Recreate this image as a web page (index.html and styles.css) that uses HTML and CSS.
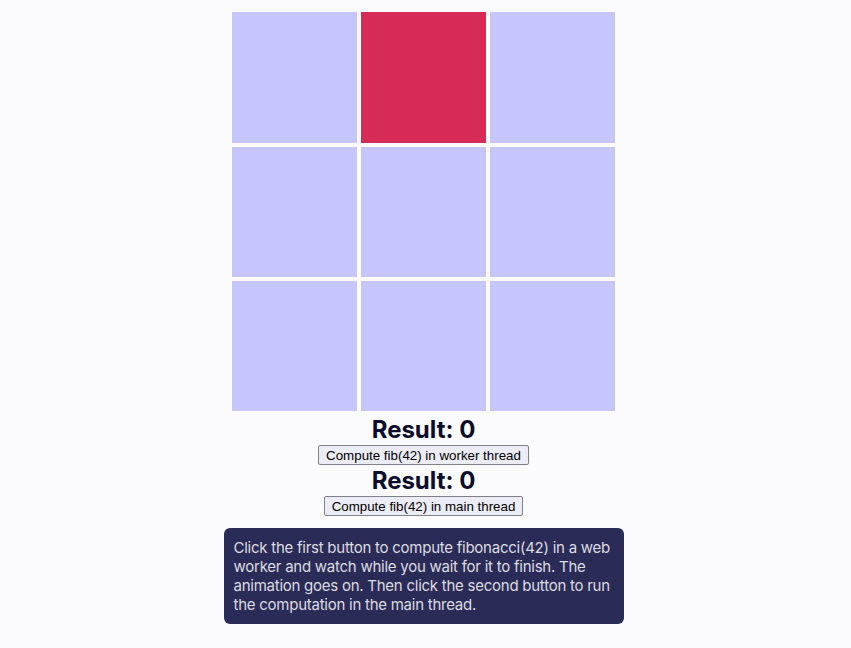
FILE: index.html
```html
<!DOCTYPE html>
<html>
<head>
<meta charset="utf-8">
<link rel="stylesheet" href="styles.css">
</head>
<body>
<main class="app">
  <div class="grid">
    <div class="cell"></div>
    <div class="cell active"></div>
    <div class="cell"></div>
    <div class="cell"></div>
    <div class="cell"></div>
    <div class="cell"></div>
    <div class="cell"></div>
    <div class="cell"></div>
    <div class="cell"></div>
  </div>
  <h2 class="result">Result: 0</h2>
  <button class="btn">Compute fib(42) in worker thread</button>
  <h2 class="result">Result: 0</h2>
  <button class="btn">Compute fib(42) in main thread</button>
  <p class="note">Click the first button to compute fibonacci(42) in a web worker and watch while you wait for it to finish. The animation goes on. Then click the second button to run the computation in the main thread.</p>
</main>
</body>
</html>
```
FILE: styles.css
```css
html, body {
  margin: 0;
  background: #fbfbfe;
}
body {
  font-family: Inter, "Noto Sans", sans-serif;
  color: #0c0c2c;
}
.app {
  display: flex;
  flex-direction: column;
  align-items: center;
  padding: 12px 4px 0 0;
}
.grid {
  display: grid;
  grid-template-columns: repeat(3, 125px);
  grid-template-rows: 131px 130px 130px;
  gap: 4px;
  margin-bottom: 3px;
}
.cell {
  background: #c6c6fc;
}
.cell.active {
  background: #d62a57;
}
.result {
  margin: 3px 0 0;
  font-size: 24px;
  line-height: 26px;
  font-weight: 700;
}
.btn {
  box-sizing: border-box;
  margin-top: 2px;
  font-family: "Liberation Sans", Arial, sans-serif;
  font-size: 13.33px;
  color: #000;
  background: #ececf6;
  border: 1px solid #80808a;
  border-radius: 2px;
  padding: 0 7px;
  height: 20px;
}
.note {
  box-sizing: border-box;
  width: 400px;
  margin: 12px 0 0;
  padding: 10px 10px;
  background: #2b2b57;
  color: #dcdce0;
  border-radius: 6px;
  font-size: 15px;
  line-height: 19px;
  letter-spacing: -0.25px;
}
```
